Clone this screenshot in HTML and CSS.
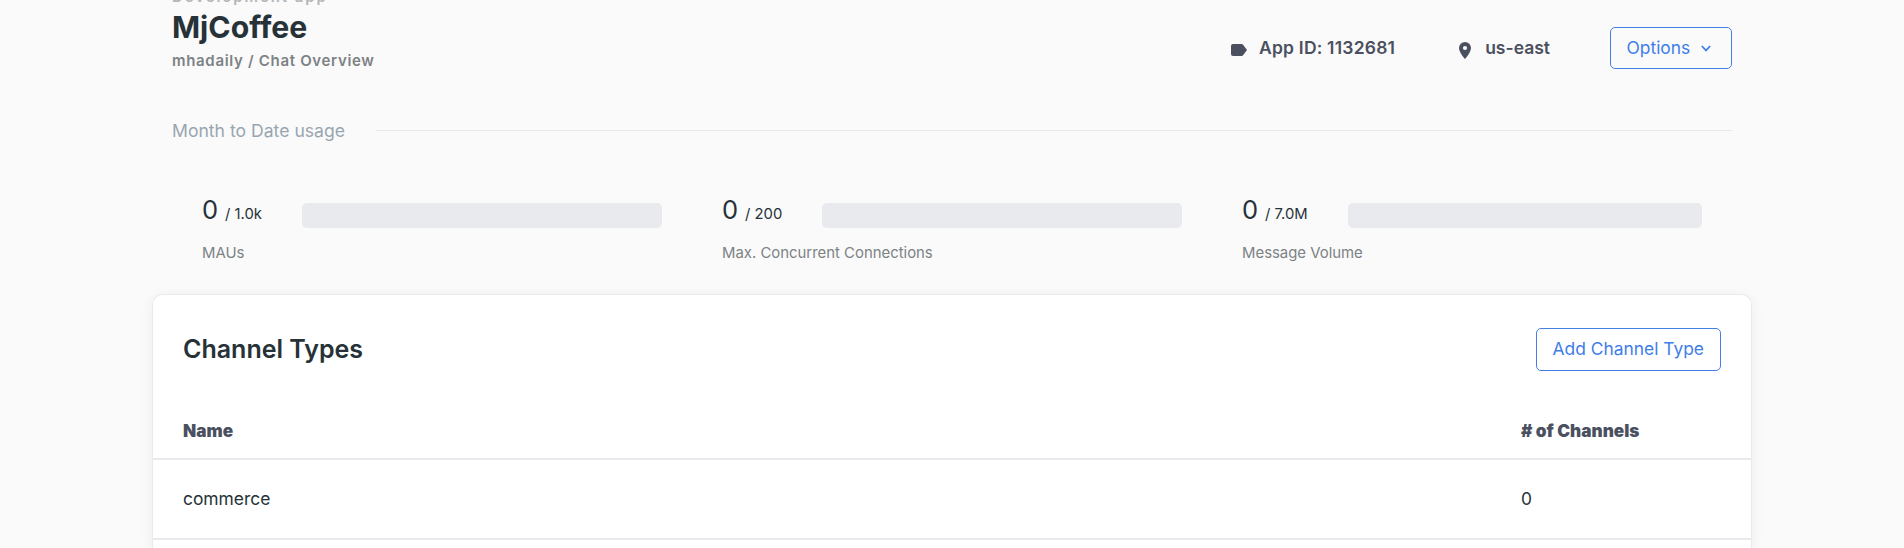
FILE: index.html
```html
<!DOCTYPE html>
<html lang="en">
<head>
<meta charset="utf-8">
<title>MjCoffee - Chat Overview</title>
<link rel="stylesheet" href="styles.css">
</head>
<body>
<main class="page">
  <header class="header">
    <div class="heading">
      <div class="eyebrow">Development app</div>
      <h1 class="title">MjCoffee</h1>
      <div class="crumbs">mhadaily / Chat Overview</div>
    </div>
    <div class="meta">
      <div class="meta-item app-id">
        <svg class="icon-label" viewBox="0 0 16 12" width="16" height="12"><path d="M2 0H10.500C11.200 0 11.700.300 12.100.800L16 6L12.100 11.200C11.700 11.700 11.200 12 10.500 12H2A2 2 0 0 1 0 10V2A2 2 0 0 1 2 0Z"/></svg>
        <span>App ID: 1132681</span>
      </div>
      <div class="meta-item region">
        <svg class="icon-pin" viewBox="0 0 12 17" width="12" height="17"><path fill-rule="evenodd" d="M6 0A6 6 0 0 0 0 6C0 10.500 6 17 6 17S12 10.500 12 6A6 6 0 0 0 6 0ZM6 8.100A2.100 2.100 0 1 1 6 3.900A2.100 2.100 0 0 1 6 8.100Z"/></svg>
        <span>us-east</span>
      </div>
      <button class="button options">Options
        <svg class="icon-chevron" viewBox="0 0 10 7" width="10" height="7"><path d="M.800 1L5 5.400L9.200 1"/></svg>
      </button>
    </div>
  </header>

  <div class="divider"><span>Month to Date usage</span></div>

  <section class="usage">
    <div class="metric">
      <div class="metric-row"><span class="value">0</span><span class="limit">/ 1.0k</span><div class="bar"></div></div>
      <div class="metric-name">MAUs</div>
    </div>
    <div class="metric">
      <div class="metric-row"><span class="value">0</span><span class="limit">/ 200</span><div class="bar"></div></div>
      <div class="metric-name">Max. Concurrent Connections</div>
    </div>
    <div class="metric">
      <div class="metric-row"><span class="value">0</span><span class="limit">/ 7.0M</span><div class="bar"></div></div>
      <div class="metric-name">Message Volume</div>
    </div>
  </section>

  <section class="card">
    <div class="card-head">
      <h2 class="card-title">Channel Types</h2>
      <button class="button">Add Channel Type</button>
    </div>
    <div class="row row-head"><span>Name</span><span># of Channels</span></div>
    <div class="row"><span>commerce</span><span>0</span></div>
  </section>
</main>
</body>
</html>
```
FILE: styles.css
```css
* { box-sizing: border-box; }
html, body { height: 100%; overflow: hidden; }
body {
  margin: 0;
  background: #fafafa;
  color: #263238;
  font-family: Inter, "Liberation Sans", sans-serif;
  font-size: 17.400px;
}
.page { display: flex; flex-direction: column; width: 1600px; height: 100%; margin: 0 auto; }
.header {
  display: flex;
  flex: none;
  justify-content: space-between;
  height: 130px;
  padding: 0 20px;
}
.heading { margin-top: -15px; white-space: nowrap; }
.eyebrow { font-size: 15px; line-height: 24px; font-weight: 600; letter-spacing: 1.900px; color: #b3b6b8; }
.title { margin: 0; font-size: 30.200px; line-height: 36px; font-weight: 700; }
.crumbs { margin-top: 6px; font-size: 15px; line-height: 20px; font-weight: 600; letter-spacing: 0.680px; color: #7d8285; }
.meta { display: flex; align-items: center; height: 42px; margin-top: 27px; }
.meta-item { display: flex; align-items: center; color: #4b5060; font-weight: 600; font-size: 17.500px; white-space: nowrap; }
.meta-item span { margin-bottom: 2px; }
.app-id span { letter-spacing: 0.200px; }
.meta-item svg { fill: #4b5060; }
.icon-label { margin: 4px 12px 0 0; }
.icon-pin { margin: 4px 14px 0 0; }
.region { margin: 0 60px 0 64px; }
.button {
  display: flex;
  align-items: center;
  height: 43px;
  padding: 0 16px 2px;
  border: 1px solid #4480e4;
  border-radius: 5px;
  background: transparent;
  color: #3f7ee8;
  font: 400 17.400px Inter, sans-serif;
  white-space: nowrap;
}
.options { width: 122px; height: 42px; padding-left: 15.500px; }
.icon-chevron { margin: 2px 0 0 10.500px; fill: none; stroke: #3f7ee8; stroke-width: 1.700; }
.divider {
  display: flex;
  flex: none;
  align-items: center;
  gap: 31px;
  height: 22px;
  margin: -11px 20px 0;
  font-size: 17.600px;
  color: #98a6b1;
}
.divider::after { content: ""; flex: 1; height: 1px; background: #e6e8ea; }
.usage { display: flex; flex: none; padding: 0 20px; margin-top: 53px; height: 100px; }
.metric { flex: 0 0 520px; padding: 0 30px; }
.metric-row { display: flex; align-items: baseline; height: 36px; line-height: 32px; }
.value { font-size: 25.500px; }
.limit { margin-left: 7px; font-size: 14.800px; }
.bar { flex: 1; align-self: flex-start; height: 25px; margin: 9px 0 0 40px; border-radius: 5px; background: #e9eaee; }
.metric-name { margin-top: 13px; font-size: 14.900px; line-height: 20px; color: #7d8285; }
.card {
  flex: 1;
  min-height: 0;
  border: 1px solid #e9eaec;
  border-bottom: 0;
  border-radius: 10px 10px 0 0;
  background: #fff;
  box-shadow: 0 2px 14px rgba(0, 0, 0, 0.06);
}
.card-head { display: flex; justify-content: space-between; align-items: center; height: 109px; padding: 0 30px; }
.card-title { margin: 0 0 2px; font-size: 25px; font-weight: 600; }
.row { display: grid; grid-template-columns: 1338px 1fr; align-items: center; height: 80px; padding: 0 30px 2px; border-bottom: 2px solid #e9eaee; }
.row-head { height: 56px; font-size: 17.200px; font-weight: 900; color: #4b5060; }
```
